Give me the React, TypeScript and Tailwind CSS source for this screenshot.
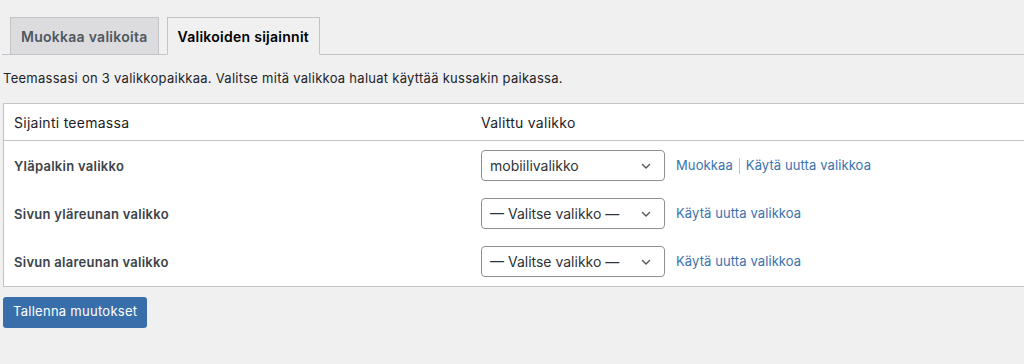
import React from "react";

const font = { fontFamily: "Inter, 'Noto Sans', 'Liberation Sans', sans-serif", letterSpacing: "0.27px" };

function Chevron() {
  return (
    <svg width="12" height="12" viewBox="0 0 12 12" fill="none" className="absolute right-[12px] top-1/2 -translate-y-1/2">
      <path d="M2.5 4.5 L6 8 L9.5 4.5" stroke="#50575e" strokeWidth="1.4" strokeLinecap="round" strokeLinejoin="round" />
    </svg>
  );
}

function Select({ value }: { value: string }) {
  return (
    <div className="relative w-[184px] h-[31px] rounded-[4px] border border-[#8c8f94] bg-white flex items-center pl-[8px] text-[14px] tracking-[0px] text-[#2c3338]">
      {value}
      <Chevron />
    </div>
  );
}

function Row({ label, value, edit }: { label: string; value: string; edit?: boolean }) {
  return (
    <div className="flex items-center h-[48px]">
      <div className="w-[477px] pl-[10px] pt-[2px] text-[13px] font-semibold text-[#3c434a]">{label}</div>
      <Select value={value} />
      <div className="ml-[11px] flex items-center text-[13px] text-[#3a72b0] tracking-[0.1px]">
        {edit && (
          <>
            <span>Muokkaa</span>
            <span className="mx-[6px] h-[16px] w-px bg-[#c3c4c7]" />
          </>
        )}
        <span>Käytä uutta valikkoa</span>
      </div>
    </div>
  );
}

export default function App() {
  return (
    <div className="w-[1024px] h-[364px] overflow-hidden bg-[#f0f0f1]" style={font}>
      <div className="pt-[17px] pl-[2px]">
        <div className="flex items-end border-b border-[#c3c4c7] w-[1100px] pl-[8px] h-[38px]">
          <div className="h-[38px] -mb-px px-[10px] flex items-center border border-[#c3c4c7] bg-[#dcdcde] text-[14px] font-semibold text-[#50575e]">
            Muokkaa valikoita
          </div>
          <div className="ml-[8px] h-[38px] -mb-px px-[10px] flex items-center border border-[#c3c4c7] border-b-[#f0f0f1] bg-[#f0f0f1] text-[14px] font-semibold text-black">
            Valikoiden sijainnit
          </div>
        </div>
      </div>
      <p className="pl-[3px] mt-[14px] text-[13px] text-[#1d2327]">
        Teemassasi on 3 valikkopaikkaa. Valitse mitä valikkoa haluat käyttää kussakin paikassa.
      </p>
      <div className="ml-[3px] mt-[14px] w-[1100px] border border-[#c3c4c7] bg-white">
        <div className="flex items-center h-[37px] border-b border-[#c3c4c7] text-[14px] text-[#1d2327]">
          <div className="w-[477px] pl-[10px] pt-px">Sijainti teemassa</div>
          <div className="pt-px">Valittu valikko</div>
        </div>
        <div className="pt-[1px]">
          <Row label="Yläpalkin valikko" value="mobiilivalikko" edit />
          <Row label="Sivun yläreunan valikko" value="— Valitse valikko —" />
          <Row label="Sivun alareunan valikko" value="— Valitse valikko —" />
        </div>
      </div>
      <button className="ml-[3px] mt-[10px] h-[31px] px-[10px] rounded-[3px] bg-[#386fab] text-white text-[13px]">
        Tallenna muutokset
      </button>
    </div>
  );
}
